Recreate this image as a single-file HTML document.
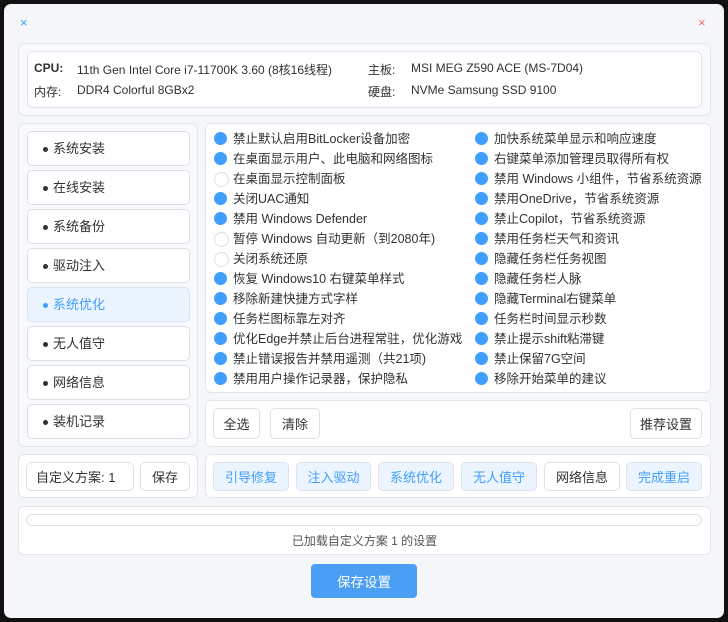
<!DOCTYPE html>
<html><head><meta charset="utf-8"><style>
*{margin:0;padding:0;box-sizing:border-box}
body{width:728px;height:622px;background:#111;position:relative;overflow:hidden;font-family:"Liberation Sans","Noto Sans CJK SC",sans-serif;font-size:12px;color:#303133}
.win{position:absolute;left:4px;top:4px;width:720px;height:614px;background:#f4f6fa;border-radius:7px}
.a{position:absolute}
.panel{position:absolute;background:#f8f9fc;border:1px solid #e2e5ea;border-radius:6px}
.wbox{position:absolute;background:#fff;border:1px solid #e2e5ea;border-radius:6px}
.btn{position:absolute;background:#fff;border:1px solid #dcdfe6;border-radius:5px;display:flex;align-items:center;justify-content:center;font-size:13px;color:#303133}
.btn.b{background:#ecf5ff;border-color:#d9e3ef;color:#409eff}
.nav{position:absolute;left:27px;width:163px;height:35px;background:#fff;border:1px solid #dcdfe6;border-radius:5px;font-size:13px;line-height:33px;padding-left:25px}
.nav::before{content:"";position:absolute;left:15px;top:15px;width:5px;height:5px;border-radius:50%;background:#303133}
.nav.on{background:#ecf5ff;border-color:#d9e3ef;color:#409eff}
.nav.on::before{background:#409eff}
.opt{position:absolute;height:20px;line-height:20px;font-size:12.5px;white-space:nowrap;padding-left:19px}
.opt::before{content:"";position:absolute;left:0;top:3px;width:13px;height:13px;border-radius:50%;background:#409eff}
.opt.off::before{background:#fff;border:1px solid #dcdfe6}
</style></head><body>
<div class="win"></div>
<div class="a" style="left:20px;top:15px;color:#409eff;font-size:13px">×</div>
<div class="a" style="left:698px;top:15px;color:#f56c6c;font-size:13px">×</div>

<div class="panel" style="left:18px;top:43px;width:693px;height:73px"></div>
<div class="wbox" style="left:27px;top:51px;width:675px;height:57px"></div>
<div class="a" style="left:34px;top:61px;font-weight:bold">CPU:</div>
<div class="a" style="left:77px;top:61px">11th Gen Intel Core i7-11700K 3.60 (8核16线程)</div>
<div class="a" style="left:368px;top:61px">主板:</div>
<div class="a" style="left:411px;top:61px">MSI MEG Z590 ACE (MS-7D04)</div>
<div class="a" style="left:34px;top:83px">内存:</div>
<div class="a" style="left:77px;top:83px">DDR4 Colorful 8GBx2</div>
<div class="a" style="left:368px;top:83px">硬盘:</div>
<div class="a" style="left:411px;top:83px">NVMe Samsung SSD 9100</div>

<div class="panel" style="left:18px;top:123px;width:180px;height:324px"></div>
<div class="nav" style="top:131px">系统安装</div>
<div class="nav" style="top:170px">在线安装</div>
<div class="nav" style="top:209px">系统备份</div>
<div class="nav" style="top:248px">驱动注入</div>
<div class="nav on" style="top:287px">系统优化</div>
<div class="nav" style="top:326px">无人值守</div>
<div class="nav" style="top:365px">网络信息</div>
<div class="nav" style="top:404px">装机记录</div>

<div class="wbox" style="left:205px;top:123px;width:506px;height:270px"></div>
<div class="opt" style="left:214px;top:129px">禁止默认启用BitLocker设备加密</div>
<div class="opt" style="left:214px;top:149px">在桌面显示用户、此电脑和网络图标</div>
<div class="opt off" style="left:214px;top:169px">在桌面显示控制面板</div>
<div class="opt" style="left:214px;top:189px">关闭UAC通知</div>
<div class="opt" style="left:214px;top:209px">禁用 Windows Defender</div>
<div class="opt off" style="left:214px;top:229px">暂停 Windows 自动更新（到2080年)</div>
<div class="opt off" style="left:214px;top:249px">关闭系统还原</div>
<div class="opt" style="left:214px;top:269px">恢复 Windows10 右键菜单样式</div>
<div class="opt" style="left:214px;top:289px">移除新建快捷方式字样</div>
<div class="opt" style="left:214px;top:309px">任务栏图标靠左对齐</div>
<div class="opt" style="left:214px;top:329px">优化Edge并禁止后台进程常驻，优化游戏</div>
<div class="opt" style="left:214px;top:349px">禁止错误报告并禁用遥测（共21项)</div>
<div class="opt" style="left:214px;top:369px">禁用用户操作记录器，保护隐私</div>
<div class="opt" style="left:475px;top:129px">加快系统菜单显示和响应速度</div>
<div class="opt" style="left:475px;top:149px">右键菜单添加管理员取得所有权</div>
<div class="opt" style="left:475px;top:169px">禁用 Windows 小组件，节省系统资源</div>
<div class="opt" style="left:475px;top:189px">禁用OneDrive，节省系统资源</div>
<div class="opt" style="left:475px;top:209px">禁止Copilot，节省系统资源</div>
<div class="opt" style="left:475px;top:229px">禁用任务栏天气和资讯</div>
<div class="opt" style="left:475px;top:249px">隐藏任务栏任务视图</div>
<div class="opt" style="left:475px;top:269px">隐藏任务栏人脉</div>
<div class="opt" style="left:475px;top:289px">隐藏Terminal右键菜单</div>
<div class="opt" style="left:475px;top:309px">任务栏时间显示秒数</div>
<div class="opt" style="left:475px;top:329px">禁止提示shift粘滞键</div>
<div class="opt" style="left:475px;top:349px">禁止保留7G空间</div>
<div class="opt" style="left:475px;top:369px">移除开始菜单的建议</div>

<div class="wbox" style="left:205px;top:400px;width:506px;height:47px"></div>
<div class="btn" style="left:213px;top:408px;width:47px;height:31px">全选</div>
<div class="btn" style="left:270px;top:408px;width:50px;height:31px">清除</div>
<div class="btn" style="left:630px;top:408px;width:72px;height:31px">推荐设置</div>

<div class="wbox" style="left:18px;top:454px;width:180px;height:44px"></div>
<div class="btn" style="left:26px;top:462px;width:108px;height:29px;justify-content:flex-start;padding-left:9px">自定义方案: 1</div>
<div class="btn" style="left:140px;top:462px;width:50px;height:29px">保存</div>

<div class="wbox" style="left:205px;top:454px;width:506px;height:44px"></div>
<div class="btn b" style="left:213px;top:462px;width:76px;height:29px">引导修复</div>
<div class="btn b" style="left:296px;top:462px;width:75px;height:29px">注入驱动</div>
<div class="btn b" style="left:378px;top:462px;width:76px;height:29px">系统优化</div>
<div class="btn b" style="left:461px;top:462px;width:76px;height:29px">无人值守</div>
<div class="btn" style="left:544px;top:462px;width:76px;height:29px">网络信息</div>
<div class="btn b" style="left:626px;top:462px;width:76px;height:29px">完成重启</div>

<div class="wbox" style="left:18px;top:506px;width:693px;height:49px"></div>
<div class="a" style="left:26px;top:514px;width:676px;height:12px;border:1px solid #dcdfe6;border-radius:6px;background:#fff"></div>
<div class="a" style="left:18px;top:532px;width:693px;text-align:center;color:#555">已加载自定义方案 1 的设置</div>

<div class="a" style="left:311px;top:564px;width:106px;height:34px;background:#4a9ff5;border-radius:4px;color:#fff;font-size:13.5px;display:flex;align-items:center;justify-content:center">保存设置</div>
</body></html>
